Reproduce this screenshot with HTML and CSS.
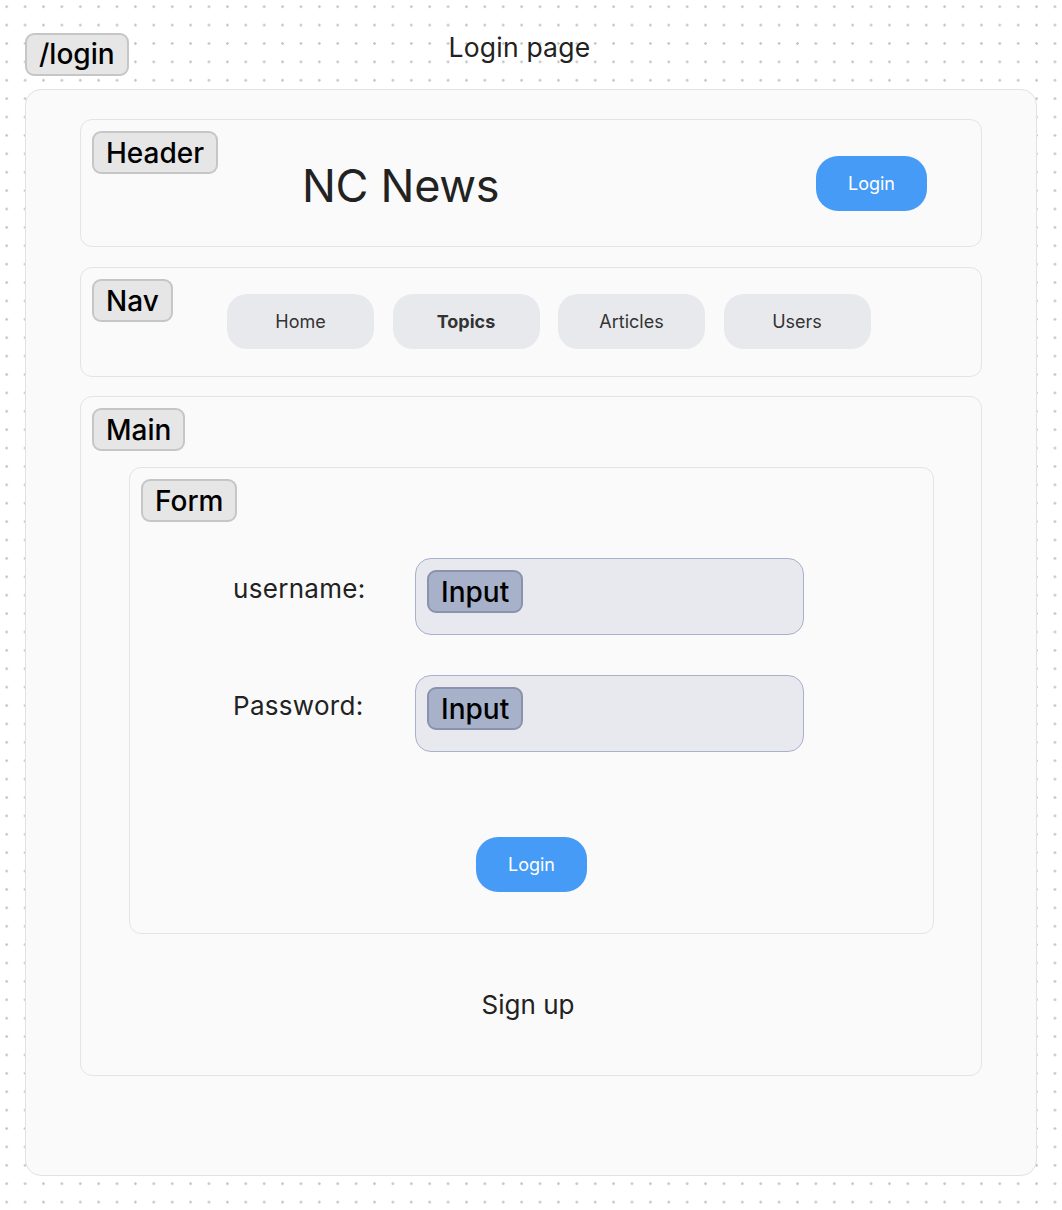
FILE: index.html
```html
<!DOCTYPE html>
<html lang="en">
<head>
<meta charset="utf-8">
<title>Login page</title>
<link rel="stylesheet" href="styles.css">
</head>
<body>
<div class="page">
  <div class="top">
    <span class="tag">/login</span>
    <span class="title">Login page</span>
  </div>
  <div class="frame">
    <div class="box header">
      <span class="tag box-tag">Header</span>
      <span class="brand">NC News</span>
      <button class="btn">Login</button>
    </div>
    <div class="box nav">
      <span class="tag box-tag">Nav</span>
      <a class="pill">Home</a>
      <a class="pill bold">Topics</a>
      <a class="pill">Articles</a>
      <a class="pill">Users</a>
    </div>
    <div class="box main">
      <span class="tag box-tag">Main</span>
      <div class="box form">
        <span class="tag box-tag">Form</span>
        <div class="row">
          <label class="label">username:</label>
          <div class="input"><span class="tag input-tag">Input</span></div>
        </div>
        <div class="row">
          <label class="label">Password:</label>
          <div class="input"><span class="tag input-tag">Input</span></div>
        </div>
        <div class="submit"><button class="btn">Login</button></div>
      </div>
      <div class="signup">Sign up</div>
    </div>
  </div>
</div>
</body>
</html>
```
FILE: styles.css
```css
* { box-sizing: border-box; }
html, body { margin: 0; }
body {
  width: 1062px;
  height: 1210px;
  font-family: Inter, "Noto Sans", sans-serif;
  color: #222;
  background-color: #ffffff;
  background-image: radial-gradient(circle, #c4c4c4 1px, transparent 1.5px);
  background-size: 18.4px 18.4px;
  background-position: -2.5px -2.5px;
  overflow: hidden;
}
.page { padding: 33px 0 0 25px; }
.top { display: flex; align-items: center; height: 42px; }
.title {
  margin-left: 320px;
  font-size: 26.5px;
  letter-spacing: 0.2px;
  margin-top: -14px;
  color: #222;
}
.tag {
  display: inline-flex;
  align-items: center;
  height: 43px;
  padding: 0 12px;
  background: #e6e6e6;
  border: 2px solid #c6c6c6;
  border-radius: 9px;
  font-size: 28px;
  font-weight: 500;
  color: #000;
  line-height: 1;
}
.frame {
  margin-top: 14px;
  width: 1012px;
  height: 1087px;
  border: 1px solid #e2e2e2;
  border-radius: 16px;
  background: #fafafa;
  padding: 29px 0 0 54px;
}
.box {
  position: relative;
  border: 1px solid #e4e4e4;
  border-radius: 12px;
  background: #fafafa;
}
.box-tag { position: absolute; left: 11px; top: 11px; }
.header {
  width: 902px;
  height: 128px;
  display: flex;
  align-items: center;
  justify-content: space-between;
  padding: 4px 54px 0 221px;
}
.brand { font-size: 45px; color: #222; letter-spacing: -0.3px; }
.btn {
  width: 111px;
  height: 55px;
  border: none;
  border-radius: 22px;
  background: #469bf7;
  color: #fff;
  font-family: Inter, "Noto Sans", sans-serif;
  font-size: 18px;
}
.header .btn { margin-top: -4px; }
.nav {
  margin-top: 20px;
  width: 902px;
  height: 110px;
  display: flex;
  align-items: center;
  gap: 18.5px;
  padding: 0 0 1px 146px;
}
.pill {
  width: 147px;
  height: 55px;
  border-radius: 20px;
  background: #e8e9ed;
  display: flex;
  align-items: center;
  justify-content: center;
  font-size: 18px;
  color: #333;
}
.pill.bold { font-weight: 700; }
.main {
  margin-top: 19px;
  width: 902px;
  height: 680px;
  padding: 70px 0 0 48px;
}
.form {
  width: 805px;
  height: 467px;
  padding: 90px 0 0 103px;
}
.row { display: flex; align-items: flex-start; height: 77px; margin-bottom: 40px; }
.label {
  width: 182px;
  font-size: 26px;
  line-height: 32px;
  padding-top: 15px;
  letter-spacing: 0.3px;
  color: #222;
}
.input {
  width: 389px;
  height: 77px;
  background: #e8e9ee;
  border: 1.5px solid #a9b0cb;
  border-radius: 16px;
  padding: 11px 0 0 11px;
}
.input-tag { background: #a7b1ca; border-color: #8a93ab; }
.submit {
  display: flex;
  justify-content: center;
  margin: 85px 0 0 -103px;
}
.signup {
  margin-top: 55px;
  text-align: center;
  font-size: 26px;
  line-height: 32px;
  padding-right: 54px;
  color: #222;
}
```
